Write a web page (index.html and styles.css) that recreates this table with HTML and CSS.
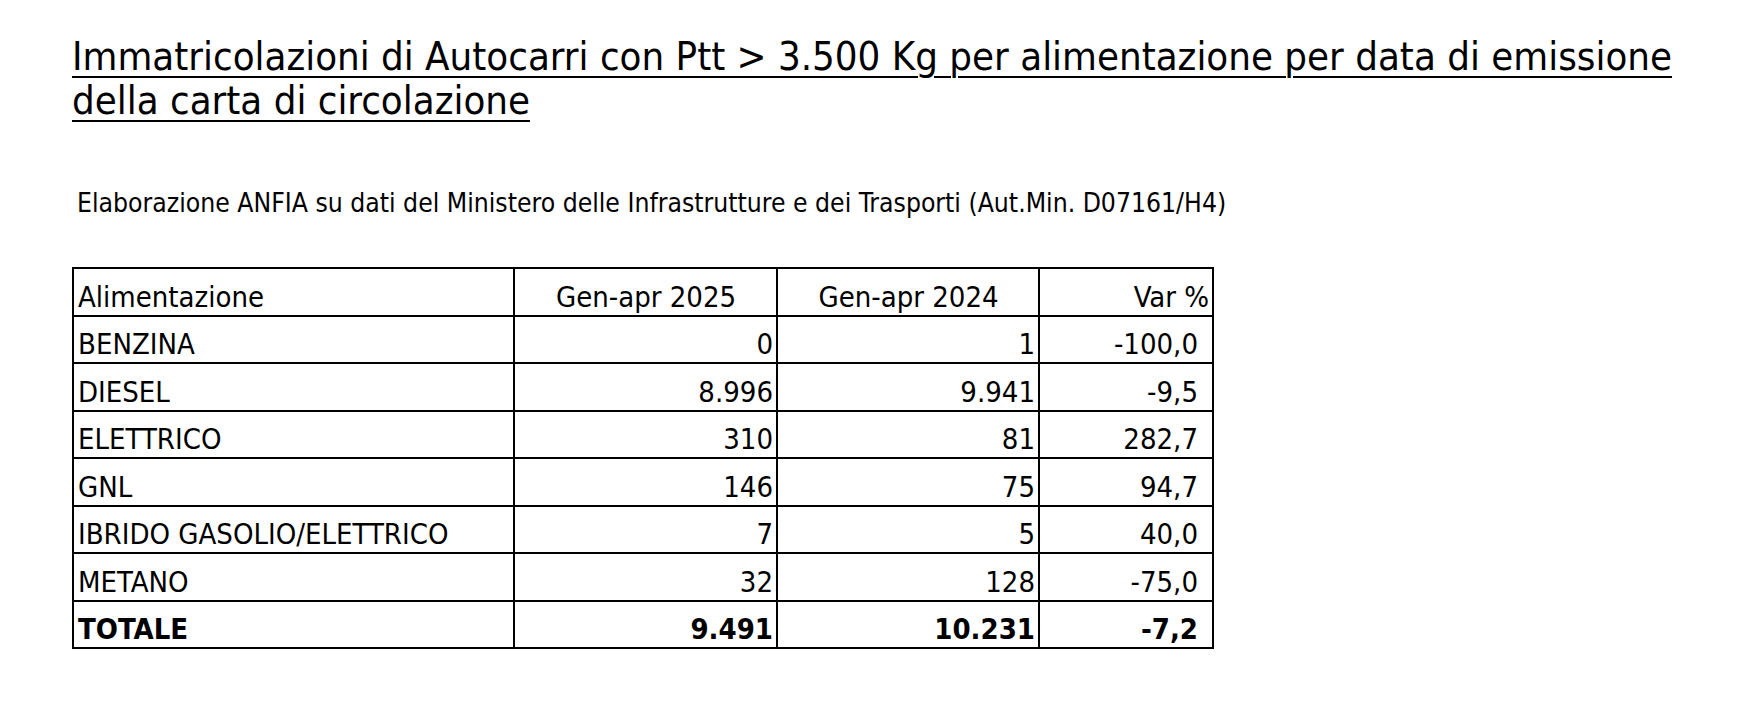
FILE: index.html
```html
<!DOCTYPE html>
<html lang="it">
<head>
<meta charset="utf-8">
<title>Immatricolazioni Autocarri</title>
<link rel="stylesheet" href="styles.css">
</head>
<body>
<main class="page">
  <h1 class="title">Immatricolazioni di Autocarri con Ptt &gt; 3.500 Kg per alimentazione per data di emissione della carta di circolazione</h1>
  <p class="source">Elaborazione ANFIA su dati del Ministero delle Infrastrutture e dei Trasporti (Aut.Min. D07161/H4)</p>
  <table class="data">
    <colgroup>
      <col class="c1"><col class="c2"><col class="c3"><col class="c4">
    </colgroup>
    <thead>
      <tr>
        <th class="left">Alimentazione</th>
        <th class="center">Gen-apr 2025</th>
        <th class="center">Gen-apr 2024</th>
        <th class="right">Var %</th>
      </tr>
    </thead>
    <tbody>
      <tr><td class="left">BENZINA</td><td>0</td><td>1</td><td class="var">-100,0</td></tr>
      <tr><td class="left">DIESEL</td><td>8.996</td><td>9.941</td><td class="var">-9,5</td></tr>
      <tr><td class="left">ELETTRICO</td><td>310</td><td>81</td><td class="var">282,7</td></tr>
      <tr><td class="left">GNL</td><td>146</td><td>75</td><td class="var">94,7</td></tr>
      <tr><td class="left">IBRIDO GASOLIO/ELETTRICO</td><td>7</td><td>5</td><td class="var">40,0</td></tr>
      <tr><td class="left">METANO</td><td>32</td><td>128</td><td class="var">-75,0</td></tr>
      <tr class="total"><td class="left">TOTALE</td><td>9.491</td><td>10.231</td><td class="var">-7,2</td></tr>
    </tbody>
  </table>
</main>
</body>
</html>
```

FILE: styles.css
```css
html, body {
  margin: 0;
  padding: 0;
  background: #ffffff;
}

body {
  font-family: "DejaVu Sans Condensed", "DejaVu Sans", sans-serif;
  font-stretch: condensed;
  color: #000000;
}

.page {
  padding: 34px 0 0 72px;
  display: flex;
  flex-direction: column;
  align-items: flex-start;
}

.title {
  margin: 0;
  width: 1620px;
  font-size: 39.8px;
  line-height: 44px;
  font-weight: normal;
  text-decoration: underline;
  text-decoration-thickness: 2px;
  text-underline-offset: 6px;
}

.source {
  margin: 66px 0 0 5px;
  font-size: 26.3px;
  line-height: 30px;
}

.data {
  margin-top: 49px;
  border-collapse: collapse;
  table-layout: fixed;
  width: 1140px;
  font-size: 29px;
}

.c1 { width: 441px; }
.c2 { width: 263px; }
.c3 { width: 262px; }
.c4 { width: 174px; }

.data th,
.data td {
  border: 2px solid #000000;
  height: 47.5px;
  box-sizing: border-box;
  padding: 0 3px 1px 4px;
  vertical-align: bottom;
  line-height: normal;
  text-align: right;
  font-weight: normal;
  white-space: nowrap;
}

.data .left { text-align: left; }
.data .center { text-align: center; }
.data .right { text-align: right; }
.data .var { padding-right: 14px; }

.total td { font-weight: bold; }
```
